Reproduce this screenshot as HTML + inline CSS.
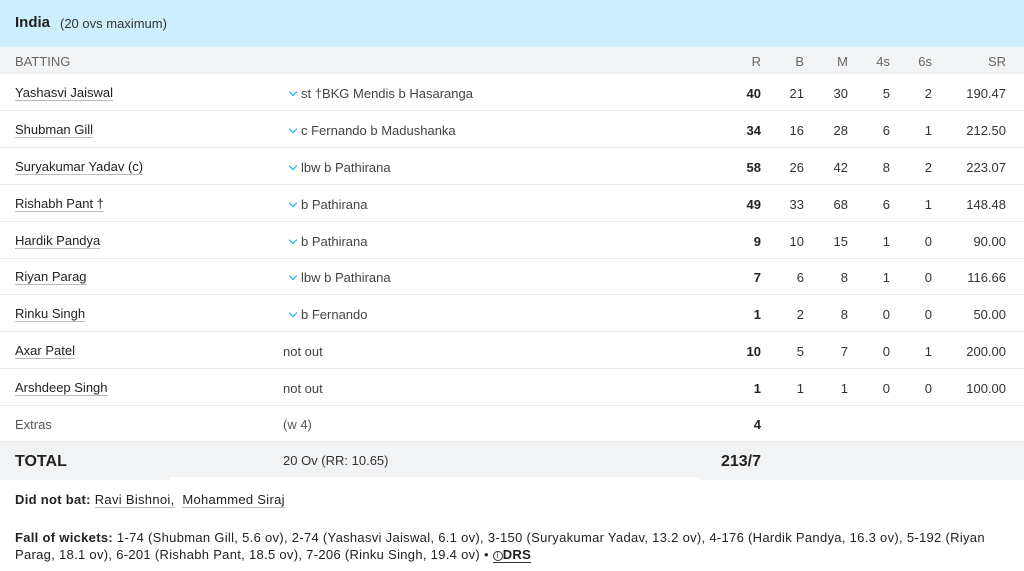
<!DOCTYPE html>
<html><head><style>
*{margin:0;padding:0;box-sizing:border-box}
body{width:1024px;height:571px;background:#fff;font-family:"Liberation Sans",sans-serif;color:#333;position:relative;overflow:hidden}
.hdr{position:absolute;left:0;top:0;width:1024px;height:47px;background:#cdeefc}
.hdr b{position:absolute;left:15px;top:14px;font-size:15px;color:#222}
.hdr span{position:absolute;left:60px;top:16px;font-size:13px;color:#333}
.row{position:absolute;left:0;width:1024px;height:37px;border-bottom:1px solid #e8e8e8;font-size:13px}
.row div{position:absolute;top:12px;white-space:nowrap}
.gray{background:#f2f3f4}
.n{left:15px;color:#222;border-bottom:1px solid #bbb;line-height:14px}
.d{left:301px;color:#444}
.d::before{content:"";position:absolute;left:-11px;top:3px;width:5px;height:5px;border-right:1.5px solid #03a9f4;border-bottom:1.5px solid #03a9f4;transform:rotate(45deg)}
.r{right:263px;font-weight:bold;color:#222}
.b{right:220px}.m{right:176px}.f{right:134px}.s{right:92px}.sr{right:18px}
.h div{color:#666;top:7px}
.foot{position:absolute;left:15px;font-size:13px;color:#222;letter-spacing:0.3px}
.foot b{font-weight:bold}
</style></head><body>
<div class="hdr"><b>India</b><span>(20 ovs maximum)</span></div>
<div class="row gray h" style="top:47px;height:27px;border:none"><div style="left:15px">BATTING</div><div class="r" style="font-weight:normal;color:#666">R</div><div class="b">B</div><div class="m">M</div><div class="f">4s</div><div class="s">6s</div><div class="sr">SR</div></div>
<div class="row" style="top:74px"><div class="n">Yashasvi Jaiswal</div><div class="d">st †BKG Mendis b Hasaranga</div><div class="r">40</div><div class="b">21</div><div class="m">30</div><div class="f">5</div><div class="s">2</div><div class="sr">190.47</div></div>
<div class="row" style="top:111px"><div class="n">Shubman Gill</div><div class="d">c Fernando b Madushanka</div><div class="r">34</div><div class="b">16</div><div class="m">28</div><div class="f">6</div><div class="s">1</div><div class="sr">212.50</div></div>
<div class="row" style="top:148px"><div class="n">Suryakumar Yadav (c)</div><div class="d">lbw b Pathirana</div><div class="r">58</div><div class="b">26</div><div class="m">42</div><div class="f">8</div><div class="s">2</div><div class="sr">223.07</div></div>
<div class="row" style="top:185px"><div class="n">Rishabh Pant †</div><div class="d">b Pathirana</div><div class="r">49</div><div class="b">33</div><div class="m">68</div><div class="f">6</div><div class="s">1</div><div class="sr">148.48</div></div>
<div class="row" style="top:222px"><div class="n">Hardik Pandya</div><div class="d">b Pathirana</div><div class="r">9</div><div class="b">10</div><div class="m">15</div><div class="f">1</div><div class="s">0</div><div class="sr">90.00</div></div>
<div class="row" style="top:258px"><div class="n">Riyan Parag</div><div class="d">lbw b Pathirana</div><div class="r">7</div><div class="b">6</div><div class="m">8</div><div class="f">1</div><div class="s">0</div><div class="sr">116.66</div></div>
<div class="row" style="top:295px"><div class="n">Rinku Singh</div><div class="d">b Fernando</div><div class="r">1</div><div class="b">2</div><div class="m">8</div><div class="f">0</div><div class="s">0</div><div class="sr">50.00</div></div>
<div class="row" style="top:332px"><div class="n">Axar Patel</div><div style="left:283px;color:#444">not out</div><div class="r">10</div><div class="b">5</div><div class="m">7</div><div class="f">0</div><div class="s">1</div><div class="sr">200.00</div></div>
<div class="row" style="top:369px"><div class="n">Arshdeep Singh</div><div style="left:283px;color:#444">not out</div><div class="r">1</div><div class="b">1</div><div class="m">1</div><div class="f">0</div><div class="s">0</div><div class="sr">100.00</div></div>
<div class="row" style="top:405px"><div style="left:15px;color:#555">Extras</div><div style="left:283px;color:#555">(w 4)</div><div class="r">4</div></div>
<div class="row gray" style="top:442px;height:38px;border:none"><div style="left:15px;top:11px;font-size:16px;font-weight:bold;color:#222">TOTAL</div><div style="left:283px;top:11px;color:#333">20 Ov (RR: 10.65)</div><div class="r" style="top:11px;font-size:16px">213/7</div></div>
<div style="position:absolute;left:170px;top:477px;width:530px;height:3px;background:#fff"></div>
<div class="foot" style="top:492px"><b>Did not bat:</b> <span style="border-bottom:1px solid #bbb">Ravi Bishnoi,</span> &nbsp;<span style="border-bottom:1px solid #bbb">Mohammed Siraj</span></div>
<div class="foot" style="top:529px;width:990px;line-height:17px"><b>Fall of wickets:</b> 1-74 (Shubman Gill, 5.6 ov), 2-74 (Yashasvi Jaiswal, 6.1 ov), 3-150 (Suryakumar Yadav, 13.2 ov), 4-176 (Hardik Pandya, 16.3 ov), 5-192 (Riyan Parag, 18.1 ov), 6-201 (Rishabh Pant, 18.5 ov), 7-206 (Rinku Singh, 19.4 ov) • <span style="border-bottom:1px solid #333"><span style="display:inline-block;width:10px;height:10px;border:1px solid #333;border-radius:50%;font-size:8px;line-height:8px;text-align:center;vertical-align:1px">i</span><b>DRS</b></span></div>
</body></html>
